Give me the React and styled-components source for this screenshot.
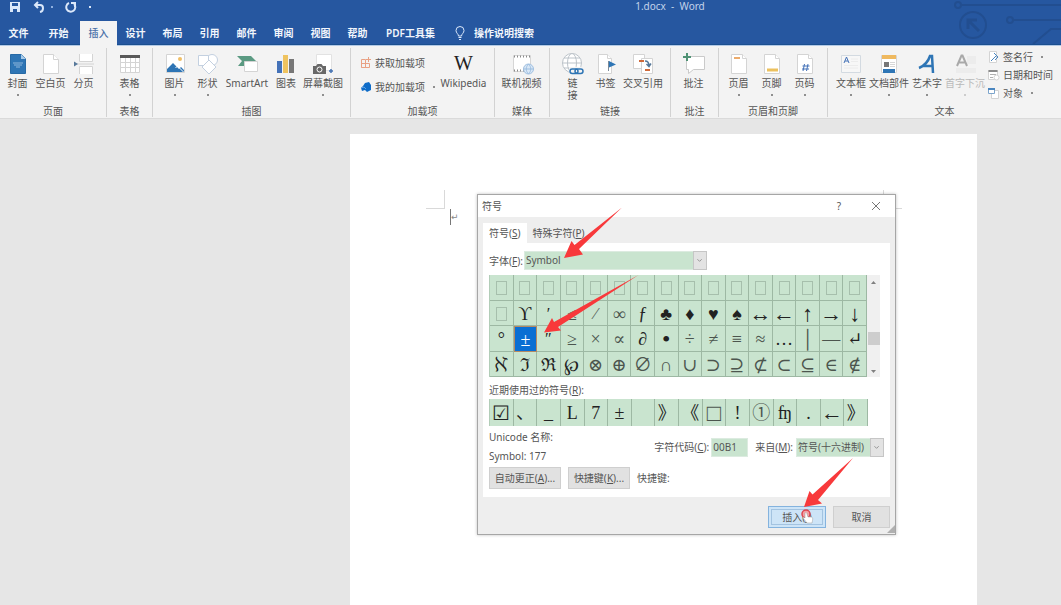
import React, { useState } from "react";
import styled, { createGlobalStyle, css } from "styled-components";

const GlobalStyle = createGlobalStyle`
  * {
    box-sizing: border-box;
  }
  body {
    margin: 0;
    background: #e6e6e6;
    color: #555;
    font-family: "Noto Sans", "Noto Sans CJK SC", sans-serif;
    font-size: 10px;
    line-height: 14px;
  }
  button, input, select {
    margin: 0;
    padding: 0;
    border: 0;
    border-radius: 0;
    background: none;
    color: inherit;
    font: inherit;
  }
`;

const Window = styled.div`
  display: flex;
  flex-direction: column;
  min-height: 100vh;
`;

/* ---------- header ---------- */

const Header = styled.header`
  position: relative;
  background: #2657a0;
  border-bottom: 1px solid #1b4f8f;
  color: #fff;
`;

const Circuit = styled.svg`
  position: absolute;
  top: 0;
  right: 0;
  width: 116px;
  height: 44px;
  fill: none;
  stroke: #224e90;
  stroke-width: 2;
`;

const TitleBar = styled.div`
  display: flex;
  height: 21px;
`;

const QuickAccess = styled.div`
  display: flex;
  align-items: center;
  width: 279px;
  height: 14px;
  padding-left: 9px;
  gap: 6px;
`;

const QuickButton = styled.button`
  display: flex;
  align-items: center;
  gap: 6px;
  height: 14px;
  margin-right: 6px;
`;

const Dot = styled.i`
  width: 2px;
  height: 2px;
  background: ${(p) => p.$color || "#8f8f8f"};
`;

const Title = styled.div`
  flex: 1;
  text-align: center;
  line-height: 13px;
  color: #c3d3ea;
  white-space: pre;
`;

const Tabs = styled.nav`
  display: flex;
  height: 23px;
`;

const Tab = styled.button`
  width: ${(p) => p.$width || 37}px;
  height: 24px;
  font-weight: 600;
  white-space: nowrap;
  color: #f2f6fc;
  ${(p) =>
    p.$active &&
    css`
      height: 25px;
      padding-bottom: 1px;
      background: #f3f3f3;
      color: #4a6fa8;
      font-weight: 500;
      z-index: 1;
    `}
`;

const TellMe = styled.button`
  display: flex;
  align-items: center;
  gap: 9px;
  height: 24px;
  margin-left: 10px;
  font-weight: 600;
  color: #f2f6fc;
`;

/* ---------- ribbon ---------- */

const Ribbon = styled.div`
  display: flex;
  height: 74px;
  padding-top: 2px;
  background: #f3f3f3;
  border-top: 1px solid #b3c9e6;
  border-bottom: 1px solid #dadada;
`;

const Group = styled.section`
  display: flex;
  flex-direction: column;
  flex: ${(p) => (p.$width ? `0 0 ${p.$width}px` : "1")};
  height: 69px;
  border-right: ${(p) => (p.$width ? "1px solid #d2d2d2" : "0")};
`;

const GroupBody = styled.div`
  display: flex;
  flex: 1;
  padding-left: ${(p) => p.$pad}px;
`;

const GroupName = styled.div`
  height: 12px;
  line-height: 12px;
  text-align: center;
`;

const BigButton = styled.button`
  display: flex;
  flex-direction: column;
  align-items: center;
  flex: none;
  width: ${(p) => p.$width || 33}px;
  padding-top: 4px;
  line-height: 12px;
  white-space: pre;
  color: ${(p) => (p.$muted ? "#b9b9b9" : "#555")};
  svg {
    width: 24px;
    height: 24px;
    margin-bottom: 1px;
  }
  ${Dot} {
    margin-top: 5px;
  }
`;

const SmallStack = styled.div`
  display: flex;
  flex-direction: column;
  width: ${(p) => p.$width}px;
  margin-left: ${(p) => p.$left || 0}px;
  padding-top: ${(p) => p.$top}px;
  gap: ${(p) => p.$gap}px;
`;

const SmallButton = styled.button`
  display: flex;
  align-items: center;
  height: 14px;
  gap: 3px;
  white-space: nowrap;
  svg {
    width: 12px;
    height: 12px;
    flex: none;
  }
  ${Dot} {
    margin-left: 5px;
  }
`;

/* ---------- document ---------- */

const Workspace = styled.main`
  position: relative;
  display: flex;
  flex: 1;
  padding: 15px 84px 0 350px;
`;

const Sheet = styled.div`
  flex: 1;
  background: #fff;
  padding: 56px 75px 0 76px;
`;

const Margins = styled.div`
  display: flex;
  justify-content: space-between;
`;

const Corner = styled.i`
  width: 19px;
  height: 19px;
  border: 0 solid #d9d9d9;
  border-bottom-width: 1px;
  ${(p) => (p.$left ? "border-right-width: 1px;" : "border-left-width: 1px;")}
`;

const Line = styled.div`
  display: flex;
  align-items: center;
  height: 16px;
  margin-left: 24px;
  border-left: 1px solid #777;
  color: #888;
  font-family: "DejaVu Sans", sans-serif;
  font-size: 9px;
`;

/* ---------- dialog ---------- */

const Dialog = styled.div`
  position: absolute;
  top: 75px;
  left: 477px;
  width: 419px;
  padding: 0 5px 6px;
  background: #eee;
  border: 1px solid #a6a6a6;
  box-shadow: 0 0 3px rgba(0, 0, 0, 0.25);
`;

const DialogTitle = styled.div`
  display: flex;
  align-items: center;
  height: 22px;
  margin: 0 -5px 6px;
  padding: 0 13px 0 4px;
  background: #fff;
  h2 {
    flex: 1;
    margin: 0;
    font-size: 10px;
    font-weight: 400;
  }
`;

const TitleButton = styled.button`
  width: 12px;
  height: 14px;
  margin-left: 25px;
  line-height: 14px;
  svg {
    display: block;
    margin: 3px auto;
  }
`;

const DialogTabs = styled.div`
  display: flex;
  height: 20px;
`;

const DialogTab = styled.button`
  padding: 0 6px;
  height: 20px;
  background: ${(p) => (p.$active ? "#fff" : "transparent")};
`;

const Panel = styled.div`
  height: 254px;
  padding: 8px 6px 0;
  background: #fff;
`;

const Row = styled.div`
  display: flex;
  align-items: center;
  gap: ${(p) => p.$gap || 0}px;
  padding-top: ${(p) => p.$top || 0}px;
`;

const SelectBox = styled.div`
  position: relative;
  width: ${(p) => p.$width}px;
  height: 19px;
  border: 1px solid #dcebe0;
  select {
    appearance: none;
    display: block;
    width: 100%;
    height: 17px;
    padding: 0 14px 0 1px;
    background: #c9e4cf;
    line-height: 17px;
    outline: 0;
  }
  svg {
    position: absolute;
    top: -1px;
    right: -1px;
    width: 14px;
    height: 19px;
    background: #e3e3e3;
    border: 1px solid #c6c6c6;
    fill: none;
    stroke: #8a8a8a;
    pointer-events: none;
  }
`;

const SymbolArea = styled.div`
  display: flex;
  height: 102px;
  margin: 5px 4px 6px 0;
`;

const SymbolGrid = styled.div`
  display: grid;
  flex: 1;
  grid-template-columns: repeat(16, 1fr);
  grid-auto-rows: 1fr;
  background: #c9e4cf;
  border-left: 1px solid #b2cdb8;
`;

const Cell = styled.button`
  display: flex;
  align-items: center;
  justify-content: center;
  min-width: 0;
  min-height: 0;
  padding-top: 2px;
  border-right: 1px solid #9db8a3;
  border-bottom: 1px solid #9db8a3;
  color: ${(p) => (p.$light ? "#4c554e" : "#222")};
  font-family: "Liberation Serif", "DejaVu Serif", "Noto Sans CJK SC", serif;
  font-size: ${(p) => p.$size || 18}px;
  line-height: 20px;
  ${(p) =>
    p.$recent &&
    css`
      padding-top: 0;
      border-bottom: 0;
    `}
  ${(p) =>
    p.$active &&
    css`
      background: #0a6fd3;
      border: 1px solid #b48a63;
      color: #fff;
    `}
`;

const EmptyGlyph = styled.i`
  flex: none;
  width: 11px;
  height: 14px;
  border: 1px solid #a6bfac;
`;

const ScrollBar = styled.div`
  display: flex;
  flex-direction: column;
  justify-content: space-between;
  align-items: center;
  width: 13px;
  padding: 6px 0 4px;
  background: #f0f0f0;
  svg {
    width: 5px;
    height: 3px;
    fill: #808080;
  }
`;

const Thumb = styled.i`
  width: 12px;
  height: 13px;
  margin-top: 43px;
  margin-bottom: 21px;
  background: #cdcdcd;
`;

const RecentGrid = styled(SymbolGrid)`
  flex: none;
  height: 27px;
  margin: 2px 16px 1px 0;
`;

const Details = styled.div`
  display: flex;
  align-items: center;
  justify-content: space-between;
  height: 39px;
  margin-bottom: 1px;
  line-height: 19px;
`;

const CodeInput = styled.input`
  width: 37px;
  height: 19px;
  margin: 0 7px 0 2px;
  padding: 0 1px;
  background: #c9e4cf;
  border: 1px solid #dcebe0;
`;

const PushButton = styled.button`
  width: ${(p) => p.$width}px;
  height: 22px;
  background: #e1e1e1;
  border: 1px solid #cfcfcf;
  ${(p) =>
    p.$primary &&
    css`
      background: #cde4f7;
      border-color: #84b3de;
      outline: 1px solid #a3c3e0;
      outline-offset: -4px;
    `}
`;

const Footer = styled.div`
  display: flex;
  justify-content: flex-end;
  gap: 7px;
  padding-top: 9px;
`;

const Overlay = styled.svg`
  position: absolute;
  top: -1px;
  left: -1px;
  width: 419px;
  height: 340px;
  overflow: visible;
  pointer-events: none;
`;

/* ---------- icons ---------- */

const sheet = { fill: "#fff", stroke: "#d4d4d4" };
const icons = {
  cover: (
    <>
      <path d="M4.500 2.500h11l4 4v15h-15z" fill="#2e75b5" stroke="#276aa6" />
      <path d="M15 2v5h5z" fill="#a9cbe8" />
      <path d="M7 11h10M8 13h8M10 15h4" stroke="#8fb8dc" />
    </>
  ),
  blank: (
    <>
      <path d="M4.500 2.500h10l5 5v14h-15z" {...sheet} />
      <path d="M14.500 2.500v5h5" {...sheet} />
    </>
  ),
  pageBreak: (
    <>
      <path d="M7.500 2v7.500h13V2M7.500 22v-7.500h13V22" {...sheet} />
      <path d="M5 12h17" stroke="#d4d4d4" />
      <path d="M2 9.500l4 2.500-4 2.500z" fill="#56789a" />
    </>
  ),
  table: (
    <>
      <path d="M2.500 3.500h19v17h-19z" {...sheet} />
      <path d="M2.500 10.500h19M2.500 15.500h19M7.500 6v14.500M12.500 6v14.500M17.500 6v14.500" stroke="#d4d4d4" />
      <path d="M2 3h20v3H2z" fill="#595959" />
    </>
  ),
  picture: (
    <>
      <path d="M3.500 2.500h18v18h-18z" {...sheet} />
      <circle cx="17" cy="7" r="2" fill="#f0bf66" />
      <path d="M4 20v-3l6-6 6 6 2-2 3 3v2z" fill="#2e75b5" />
      <path d="M12.500 16l2-2 6 6" stroke="#fff" />
    </>
  ),
  shapes: (
    <g fill="#fff" stroke="#c3d0e0">
      <circle cx="16" cy="8" r="5.500" />
      <path d="M2.500 3.500h10v10h-10z" />
      <path d="M13 8l7 7-7 7-7-7z" />
    </g>
  ),
  smartArt: (
    <>
      <path d="M2 4h14l5 5h-7l-2 5H3l4-5z" fill="#5b9a82" />
      <path d="M9.500 9.500h13v10h-13z" {...sheet} />
    </>
  ),
  chart: (
    <>
      <path d="M3 9h5v12H3z" fill="#4472b8" />
      <path d="M9 3h5v18H9z" fill="#efc35f" />
      <path d="M15 7h5v14h-5z" fill="#777" />
    </>
  ),
  screenshot: (
    <>
      <path d="M5.500 2.500h15v16h-15z" fill="#fff" stroke="#e2e2e2" />
      <path d="M2 14h3l1.500-2h4l1.500 2h3v8H2z" fill="#686868" />
      <circle cx="8.500" cy="17.500" r="2.500" fill="#686868" stroke="#fff" />
      <path d="M20 17v4M18 19h4" stroke="#4473b3" strokeWidth="1.500" />
    </>
  ),
  video: (
    <>
      <path d="M3.500 3.500h17v16h-17z" fill="#fff" stroke="#d6d6d6" />
      <path d="M4 4.500h17M4 18.500h13" stroke="#8a8a8a" strokeWidth="2" strokeDasharray="1 2" />
      <circle cx="18.500" cy="17" r="5" fill="#d9e8f7" stroke="#9fbfe0" />
      <path d="M13.500 17h10M18.500 12c-3 3-3 7 0 10M18.500 12c3 3 3 7 0 10" stroke="#9fbfe0" />
    </>
  ),
  link: (
    <>
      <g fill="#fff" stroke="#bcc3c9">
        <circle cx="11" cy="11" r="9.500" />
        <ellipse cx="11" cy="11" rx="4.500" ry="9.500" />
        <path d="M1.500 11h19M3 6h16M3 16h16" />
      </g>
      <path d="M8 15h15v8H8z" fill="#f3f3f3" />
      <g stroke="#2e75b5" strokeWidth="1.500">
        <rect x="9" y="17" width="8" height="4.500" rx="2.200" />
        <rect x="14" y="17" width="8" height="4.500" rx="2.200" />
      </g>
    </>
  ),
  bookmark: (
    <>
      <path d="M4.500 2.500h9l4 4v15h-13z" {...sheet} />
      <path d="M13.500 2.500v4h4" {...sheet} />
      <path d="M14.500 9v10" stroke="#7c8b99" />
      <path d="M15 9l7 3.500-7 3z" fill="#2e75b5" />
    </>
  ),
  crossRef: (
    <>
      <path d="M2.500 2.500h11v14h-11z" {...sheet} />
      <path d="M10.500 6.500h11v15h-11z" {...sheet} />
      <path d="M8 9h5M14 18h5" stroke="#d06a3b" strokeWidth="2" />
      <path d="M14 9c3 0 4 2 4 5M15.500 12l2.500 2.500 2-3" stroke="#56789a" strokeWidth="1.500" />
    </>
  ),
  comment: (
    <>
      <path d="M4.500 4.500h18v13h-11l-5 4v-4h-2z" fill="#fff" stroke="#cacaca" />
      <path d="M5 1v8M1 5h8" stroke="#4f9274" strokeWidth="2" />
    </>
  ),
  pageHeader: (
    <>
      <path d="M4.500 2.500h11l4 4v15h-15z" {...sheet} />
      <path d="M15.500 2.500v4h4" {...sheet} />
      <path d="M7 6h6" stroke="#ecab6c" strokeWidth="2" />
    </>
  ),
  pageFooter: (
    <>
      <path d="M4.500 2.500h11l4 4v15h-15z" {...sheet} />
      <path d="M15.500 2.500v4h4" {...sheet} />
      <path d="M7 18h11" stroke="#ecc15e" strokeWidth="3" />
    </>
  ),
  pageNumber: (
    <>
      <path d="M4.500 2.500h11l4 4v15h-15z" {...sheet} />
      <path d="M15.500 2.500v4h4" {...sheet} />
      <path d="M11.500 12l-1.500 7M15 12l-1.500 7M9.500 14h7M9 17h7" stroke="#4472b8" />
    </>
  ),
  textBox: (
    <>
      <path d="M2.500 3.500h19v17h-19z" fill="#f7f7f7" stroke="#d3dae1" />
      <path d="M5 11l2.500-6L10 11M6 9h3" stroke="#4472b8" />
      <path d="M12 7h7M12 9.500h7M5 13.500h14M5 16h14" stroke="#ececec" />
    </>
  ),
  quickParts: (
    <>
      <path d="M4.500 3.500h15v17h-15z" {...sheet} />
      <path d="M5 3h14v4H5z" fill="#efb95f" />
      <path d="M7 10h5v5H7z" fill="#777" />
      <path d="M13 10.500h5M13 12.500h5M13 14.500h5" stroke="#d7d7d7" />
      <path d="M6 17h12v4H6z" fill="#2e75b5" />
    </>
  ),
  wordArt: (
    <path d="M4 16c5-2 9-6 11-12h2l1 17M8 14h10" stroke="#2e75b5" strokeWidth="2.500" />
  ),
  dropCap: (
    <>
      <path d="M14 4h9v8h-9zM3 16h20v5H3z" fill="#ececec" />
      <path d="M4 14L8.500 3.500h1L14 14M6 10.500h6" stroke="#a9a9a9" strokeWidth="2" />
    </>
  ),
};

const Icon = ({ name }) => (
  <svg viewBox="0 0 24 24" fill="none" aria-hidden="true">
    {icons[name]}
  </svg>
);

const WikiIcon = styled.span`
  height: 25px;
  font-family: "Liberation Serif", serif;
  font-size: 20px;
  line-height: 22px;
  color: #222;
`;

const Chevron = () => (
  <svg viewBox="0 0 14 19" aria-hidden="true">
    <path d="M4 8l2.500 2.500L9 8" />
  </svg>
);

/* ---------- data ---------- */

const tabs = ["插入", "设计", "布局", "引用", "邮件", "审阅", "视图", "帮助"];

const symbols = [
  ..." ".repeat(17),
  ..."ϒ′≤⁄∞ƒ♣♦♥♠↔←↑→↓",
  ..."°±″≥×∝∂•÷≠≡≈…│—↵",
  ..."ℵℑℜ℘⊗⊕∅∩∪⊃⊇⊄⊂⊆∈∉",
];

const recent = [..."☑、_L7± 》《□!①ʩ.←》"];

// glyphs that need another size than the rest of the grid
const glyphSizes = {
  "↔": 22, "←": 22, "↑": 22, "→": 22, "↓": 22,
  "•": 24, "′": 16, "″": 16, "⁄": 16, "□": 24, "☑": 20,
};

// thin mathematical operators, drawn a shade lighter
const lightGlyphs = "≤⁄∞≥×∝÷≠≡≈│—⊗⊕∅∩∪⊃⊇⊄⊂⊆∈∉①□";

const Big = ({ icon, label, width, menu, muted }) => (
  <BigButton $width={width} $muted={muted}>
    {icon === "wiki" ? <WikiIcon aria-hidden="true">W</WikiIcon> : <Icon name={icon} />}
    {label}
    {menu && <Dot $color={muted ? "#ccc" : undefined} />}
  </BigButton>
);

const RibbonGroup = ({ name, width, pad, children }) => (
  <Group $width={width} aria-label={name}>
    <GroupBody $pad={pad}>{children}</GroupBody>
    <GroupName>{name}</GroupName>
  </Group>
);

const InsertRibbon = () => (
  <Ribbon>
    <RibbonGroup name="页面" width={107} pad={1}>
      <Big icon="cover" label="封面" menu />
      <Big icon="blank" label="空白页" />
      <Big icon="pageBreak" label="分页" />
    </RibbonGroup>
    <RibbonGroup name="表格" width={46} pad={6}>
      <Big icon="table" label="表格" menu />
    </RibbonGroup>
    <RibbonGroup name="插图" width={198} pad={5}>
      <Big icon="picture" label="图片" menu />
      <Big icon="shapes" label="形状" menu />
      <Big icon="smartArt" label="SmartArt" width={46} />
      <Big icon="chart" label="图表" width={32} />
      <Big icon="screenshot" label="屏幕截图" width={42} menu />
    </RibbonGroup>
    <RibbonGroup name="加载项" width={144} pad={9}>
      <SmallStack $width={80} $top={8} $gap={10}>
        <SmallButton>
          <svg viewBox="0 0 12 12" fill="none" stroke="#e9a184" aria-hidden="true">
            <path d="M1.500 2.500h4v8h-4zM1.500 6.500h8v4h-8M8.500 0v5M6 2.500h5" />
          </svg>
          获取加载项
        </SmallButton>
        <SmallButton>
          <svg viewBox="0 0 12 12" aria-hidden="true">
            <path d="M5 2l4-1 2 3v5l-4 2-2-2-3 1-1-3 2-2z" fill="#0f6cc8" />
            <path d="M1 7l3-1 2 2" stroke="#64a6e6" fill="none" />
          </svg>
          我的加载项
          <Dot />
        </SmallButton>
      </SmallStack>
      <Big icon="wiki" label="Wikipedia" width={47} />
    </RibbonGroup>
    <RibbonGroup name="媒体" width={55} pad={10}>
      <Big icon="video" label="联机视频" />
    </RibbonGroup>
    <RibbonGroup name="链接" width={121} pad={6}>
      <Big icon="link" label={"链\n接"} />
      <Big icon="bookmark" label="书签" />
      <Big icon="crossRef" label="交叉引用" width={42} />
    </RibbonGroup>
    <RibbonGroup name="批注" width={48} pad={6}>
      <Big icon="comment" label="批注" />
    </RibbonGroup>
    <RibbonGroup name="页眉和页脚" width={109} pad={3}>
      <Big icon="pageHeader" label="页眉" menu />
      <Big icon="pageFooter" label="页脚" menu />
      <Big icon="pageNumber" label="页码" menu />
    </RibbonGroup>
    <RibbonGroup name="文本" pad={4}>
      <Big icon="textBox" label="文本框" width={38} menu />
      <Big icon="quickParts" label="文档部件" width={38} menu />
      <Big icon="wordArt" label="艺术字" width={38} menu />
      <Big icon="dropCap" label="首字下沉" width={38} menu muted />
      <SmallStack $width={70} $left={4} $top={2} $gap={4}>
        <SmallButton>
          <svg viewBox="0 0 12 12" fill="none" aria-hidden="true">
            <path d="M1.500.500h7v11h-7z" {...sheet} />
            <path d="M3 10l5-5M6 2l4 4-3 3" stroke="#4a86c0" />
          </svg>
          签名行
          <Dot />
        </SmallButton>
        <SmallButton>
          <svg viewBox="0 0 12 12" fill="none" aria-hidden="true">
            <path d="M.500 1.500h9v9h-9z" {...sheet} />
            <path d="M.500 2h9" stroke="#8a8a8a" strokeWidth="2" />
            <path d="M2 5.500h6M2 8.500h3" stroke="#b0b0b0" />
            <circle cx="8.500" cy="8.500" r="2.500" {...sheet} />
          </svg>
          日期和时间
        </SmallButton>
        <SmallButton>
          <svg viewBox="0 0 12 12" fill="none" aria-hidden="true">
            <path d="M3.500 3.500h7v8h-7z" {...sheet} />
            <path d="M.500 1.500h6v5h-6z" fill="#fff" stroke="#7da5cc" />
            <path d="M0 2h7" stroke="#4a86c0" strokeWidth="2" />
          </svg>
          对象
          <Dot />
        </SmallButton>
      </SmallStack>
    </RibbonGroup>
  </Ribbon>
);

const SymbolDialog = () => {
  const [selected, setSelected] = useState(33);

  return (
    <Dialog role="dialog" aria-labelledby="symbol-title">
      <DialogTitle>
        <h2 id="symbol-title">符号</h2>
        <TitleButton>?</TitleButton>
        <TitleButton aria-label="关闭">
          <svg width="8" height="8" viewBox="0 0 8 8" stroke="#777" aria-hidden="true">
            <path d="M0 0l8 8M8 0L0 8" />
          </svg>
        </TitleButton>
      </DialogTitle>
      <DialogTabs>
        <DialogTab $active>符号(<u>S</u>)</DialogTab>
        <DialogTab>特殊字符(<u>P</u>)</DialogTab>
      </DialogTabs>
      <Panel>
        <Row $gap={1}>
          <label htmlFor="font">字体(<u>F</u>):</label>
          <SelectBox $width={183}>
            <select id="font">
              <option>Symbol</option>
            </select>
            <Chevron />
          </SelectBox>
        </Row>
        <SymbolArea>
          <SymbolGrid>
            {symbols.map((char, index) => (
              <Cell
                key={index}
                $active={index === selected}
                $size={glyphSizes[char]}
                $light={lightGlyphs.includes(char)}
                onClick={() => setSelected(index)}
              >
                {char === " " ? <EmptyGlyph /> : char}
              </Cell>
            ))}
          </SymbolGrid>
          <ScrollBar>
            <svg viewBox="0 0 5 3" aria-hidden="true"><path d="M0 3l2.500-3L5 3z" /></svg>
            <Thumb />
            <svg viewBox="0 0 5 3" aria-hidden="true"><path d="M0 0l2.500 3L5 0z" /></svg>
          </ScrollBar>
        </SymbolArea>
        <div>近期使用过的符号(<u>R</u>):</div>
        <RecentGrid>
          {recent.map((char, index) => (
            <Cell
              key={index}
              $recent
              $size={glyphSizes[char]}
              $light={lightGlyphs.includes(char)}
            >
              {char}
            </Cell>
          ))}
        </RecentGrid>
        <Details>
          <div>
            <div>Unicode 名称:</div>
            <div>Symbol: 177</div>
          </div>
          <Row $top={2}>
            <label htmlFor="code">字符代码(<u>C</u>):</label>
            <CodeInput id="code" defaultValue="00B1" />
            <Row $gap={3}>
              <label htmlFor="from">来自(<u>M</u>):</label>
              <SelectBox $width={88}>
                <select id="from">
                  <option>符号(十六进制)</option>
                </select>
                <Chevron />
              </SelectBox>
            </Row>
          </Row>
        </Details>
        <Row $gap={7}>
          <PushButton $width={72}>自动更正(<u>A</u>)...</PushButton>
          <PushButton $width={62}>快捷键(<u>K</u>)...</PushButton>
          <span>快捷键:</span>
        </Row>
      </Panel>
      <Footer>
        <PushButton $width={58} $primary>插入(<u>I</u>)</PushButton>
        <PushButton $width={57}>取消</PushButton>
      </Footer>
      <Overlay viewBox="477 194 419 340" aria-hidden="true">
        <path d="M895 525v8h-8z" fill="#b0b0b0" />
        <g fill="#f8393b">
          <path d="M564 258l7.500-17 3 4L622 207.500 579 249l4 5.500z" />
          <path d="M544 332.500l8-14.500 2 4L638.500 275 558 327l3 3.500z" />
          <path d="M804 507l5.500-16 3 3.500L853 458l-35 42 4 3.500z" />
        </g>
        <circle cx="806" cy="514" r="4" fill="#f3a0a4" stroke="#dc4550" strokeWidth="1.500" />
        <path
          d="M805 513c1-1 2 0 2 1l1 3 3 0c2 0 2 2 1 6h-5l-4-5c0-1 1-1 2 0z"
          fill="#fff"
          stroke="#999"
          strokeWidth=".5"
        />
      </Overlay>
    </Dialog>
  );
};

const App = () => (
  <>
    <GlobalStyle />
    <Window>
      <Header>
        <Circuit viewBox="0 0 116 44" aria-hidden="true">
          <circle cx="13" cy="5" r="3" />
          <path d="M16 5h100" />
          <circle cx="28" cy="25" r="13" />
          <path d="M34 31L23 20M23 29v-9h9" strokeWidth="3" />
          <circle cx="65" cy="20" r="3" />
          <path d="M68 20h48M88 44l18-15h10" />
        </Circuit>
        <TitleBar>
          <QuickAccess>
            <QuickButton aria-label="保存">
              <svg width="12" height="12" viewBox="0 0 12 12" fill="#dbe8fa" aria-hidden="true">
                <path d="M1 1h10v10H1z" />
                <path d="M3 2h6v3H3zM4 8h4v3H4z" fill="#2657a0" />
              </svg>
            </QuickButton>
            <QuickButton aria-label="撤消">
              <svg width="12" height="12" viewBox="0 0 12 12" fill="none" stroke="#dbe8fa" strokeWidth="2" aria-hidden="true">
                <path d="M5 1L2 4l3 3M2 4h5c4 0 4 6 0 7" />
              </svg>
              <Dot $color="#8fb0df" />
            </QuickButton>
            <QuickButton aria-label="恢复">
              <svg width="12" height="12" viewBox="0 0 12 12" fill="none" stroke="#dbe8fa" strokeWidth="2" aria-hidden="true">
                <path d="M4 2a4.500 4.500 0 1 0 5 1M6 2h4v4" />
              </svg>
            </QuickButton>
            <QuickButton aria-label="自定义">
              <Dot $color="#dbe8fa" />
            </QuickButton>
          </QuickAccess>
          <Title>1.docx  -  Word</Title>
        </TitleBar>
        <Tabs>
          <Tab>文件</Tab>
          <Tab $width={43}>开始</Tab>
          {tabs.map((name) => (
            <Tab key={name} $active={name === "插入"}>{name}</Tab>
          ))}
          <Tab $width={69}>PDF工具集</Tab>
          <TellMe>
            <svg width="10" height="14" viewBox="0 0 10 14" fill="none" stroke="#dbe8fa" aria-hidden="true">
              <path d="M3.500 10c0-2-2.500-3-2.500-5.500a4 4 0 0 1 8 0C9 7 6.500 8 6.500 10zM3.500 11.500h3M4 13.500h2" />
            </svg>
            操作说明搜索
          </TellMe>
        </Tabs>
      </Header>
      <InsertRibbon />
      <Workspace>
        <Sheet>
          <Margins>
            <Corner $left />
            <Corner />
          </Margins>
          <Line>↵</Line>
        </Sheet>
        <SymbolDialog />
      </Workspace>
    </Window>
  </>
);

export default App;
